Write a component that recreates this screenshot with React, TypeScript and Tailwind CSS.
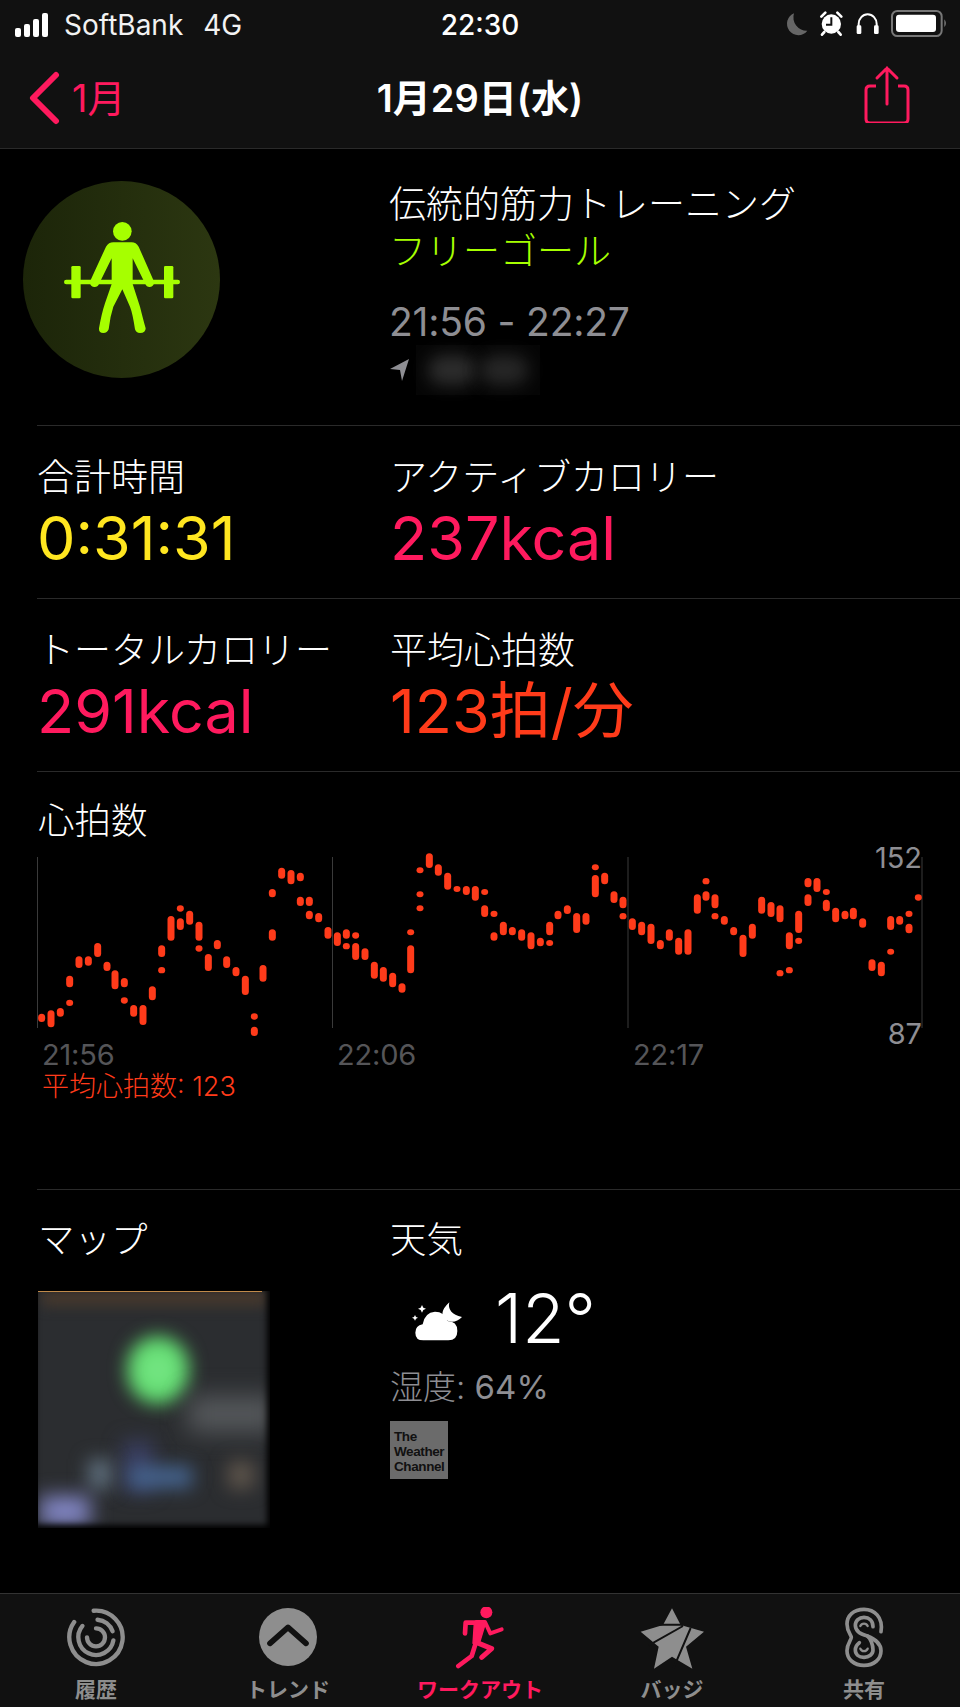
const FONT = "font-['Inter','Noto_Sans_CJK_JP',sans-serif]";

// heart rate bars, read as [x, top, bottom] in chart px * 3
const BARS: number[][] = [
  [65, 521, 546], [93, 511, 562], [121, 504, 530], [149, 479, 498], [149, 407, 442], [177, 349, 384],
  [205, 349, 377], [233, 309, 351], [261, 365, 393], [285, 391, 448], [313, 414, 442], [313, 472, 491],
  [341, 495, 530], [369, 495, 555], [397, 439, 481], [425, 381, 400], [425, 316, 351], [453, 228, 302],
  [481, 196, 215], [481, 235, 270], [509, 212, 254], [537, 245, 302], [537, 316, 335], [565, 342, 393],
  [592, 300, 328], [620, 349, 384], [648, 381, 409], [676, 407, 465], [703, 520, 539], [703, 560, 588],
  [729, 375, 425], [757, 268, 302], [757, 147, 172], [785, 83, 116], [813, 90, 133], [841, 98, 124],
  [841, 170, 198], [868, 170, 198], [868, 212, 238], [896, 219, 247], [924, 261, 296], [952, 277, 318],
  [979, 268, 296], [979, 309, 328], [1007, 277, 296], [1007, 309, 360], [1035, 325, 360], [1063, 365, 416],
  [1090, 381, 425], [1118, 398, 442], [1146, 430, 458], [1172, 316, 400], [1172, 268, 286], [1200, 196, 214],
  [1200, 154, 172], [1200, 82, 100], [1228, 40, 84], [1255, 73, 107], [1283, 98, 149], [1311, 138, 156],
  [1339, 138, 165], [1366, 138, 182], [1394, 147, 165], [1394, 196, 231],
  [1422, 212, 231], [1422, 277, 302], [1450, 245, 286], [1477, 261, 286], [1505, 268, 302], [1533, 277, 328],
  [1561, 293, 319], [1589, 245, 286], [1589, 300, 318], [1614, 212, 238], [1642, 196, 222], [1670, 219, 279],
  [1698, 219, 254], [1726, 73, 91], [1726, 105, 172], [1754, 98, 133], [1782, 154, 189], [1809, 170, 205],
  [1809, 219, 238], [1837, 235, 270], [1865, 245, 286], [1893, 251, 312], [1921, 300, 328], [1948, 268, 302],
  [1976, 293, 344], [2004, 268, 344], [2032, 163, 221], [2058, 114, 133], [2058, 154, 182], [2085, 163, 205],
  [2085, 219, 238], [2113, 228, 254], [2141, 261, 286], [2169, 284, 351], [2197, 251, 296], [2225, 170, 221],
  [2253, 186, 231], [2280, 196, 247], [2280, 390, 409], [2308, 277, 328], [2308, 381, 400], [2336, 212, 279],
  [2336, 293, 312], [2364, 114, 142], [2364, 163, 198], [2391, 114, 156], [2419, 147, 165], [2419, 179, 214],
  [2447, 203, 247], [2475, 212, 238], [2500, 203, 238], [2528, 235, 263], [2556, 358, 393], [2584, 365, 409],
  [2612, 228, 270], [2612, 326, 344], [2639, 228, 254], [2667, 212, 231], [2667, 251, 280], [2695, 163, 182],
];

function arc(cx: number, cy: number, r: number, from: number, to: number) {
  const pt = (a: number) => {
    const t = ((a - 90) * Math.PI) / 180;
    return `${(cx + r * Math.cos(t)).toFixed(1)} ${(cy + r * Math.sin(t)).toFixed(1)}`;
  };
  const large = to - from > 180 ? 1 : 0;
  return `M${pt(from)} A${r} ${r} 0 ${large} 1 ${pt(to)}`;
}

function StatusBar() {
  return (
    <div className="relative flex h-[49px] items-center pl-[15px] text-white">
      <div className="flex h-[24px] items-end gap-[3px]">
        <span className="h-[9px] w-[6px] rounded-[2px] bg-white" />
        <span className="h-[13px] w-[6px] rounded-[2px] bg-white" />
        <span className="h-[18px] w-[6px] rounded-[2px] bg-white" />
        <span className="h-[24px] w-[6px] rounded-[2px] bg-white" />
      </div>
      <span className="ml-[16px] text-[28px] leading-[30px] text-[#f2f2f2]">SoftBank</span>
      <span className="ml-[20px] text-[28px] leading-[30px] text-[#f2f2f2]">4G</span>
      <span className="absolute left-0 right-0 text-center text-[28px] leading-[30px] font-medium">22:30</span>
      <svg className="ml-auto" width="190" height="49" viewBox="0 0 570 147">
        <path d="M72 40 A34 34 0 1 0 112 92 A40 40 0 0 1 72 40Z" fill="#666" />
        <circle cx="184" cy="72" r="29" fill="#fff" />
        <path d="M184 52V74H168" stroke="#111" strokeWidth="6" fill="none" />
        <path d="M154 50 L166 38 M214 50 L202 38 M163 96 L156 104 M205 96 L212 104" stroke="#fff" strokeWidth="8" strokeLinecap="round" />
        <path d="M266 82 V72 A27 29 0 0 1 320 72 V82" stroke="#fff" strokeWidth="6" fill="none" />
        <rect x="260" y="76" width="14" height="26" rx="4" fill="#fff" />
        <rect x="312" y="76" width="14" height="26" rx="4" fill="#fff" />
        <rect x="366" y="33" width="149" height="75" rx="16" fill="none" stroke="#777" strokeWidth="6" />
        <rect x="378" y="44" width="120" height="52" rx="9" fill="#fff" />
        <path d="M523 58 Q533 70 523 82Z" fill="#777" />
      </svg>
    </div>
  );
}

function NavBar() {
  return (
    <div className="relative flex h-[99px] items-center pb-[2px]">
      <svg className="ml-[27px]" width="34" height="54" viewBox="0 0 34 54">
        <path d="M29 4 L6 27 L29 50" stroke="#ff1a5e" strokeWidth="6" strokeLinecap="round" strokeLinejoin="round" fill="none" />
      </svg>
      <span className="ml-[11px] text-[38px] leading-[40px] text-[#ff1a5e]">1月</span>
      <span className="absolute left-0 right-0 text-center text-[38px] leading-[40px] font-semibold text-white">1月29日(水)</span>
      <svg className="mb-[10px] ml-auto mr-[49px]" width="50" height="60" viewBox="0 0 50 60">
        <path d="M15 23 H9 Q5 23 5 27 V56 Q5 60 9 60 H43 Q47 60 47 56 V27 Q47 23 43 23 H37" stroke="#ff1a5e" strokeWidth="3" fill="none" />
        <path d="M26 41 V5 M16 15 L26 5 L36 15" stroke="#ff1a5e" strokeWidth="3" strokeLinecap="round" fill="none" />
      </svg>
    </div>
  );
}

function LifterIcon() {
  return (
    <svg width="150" height="130" viewBox="0 0 450 390" fill="#a6ff00">
      <circle cx="217" cy="64" r="28" />
      <rect x="42" y="209" width="348" height="14" rx="7" />
      <rect x="64" y="168" width="28" height="97" rx="4" />
      <rect x="342" y="168" width="28" height="97" rx="4" />
      <path d="M190 97 H245 Q258 97 266 110 L311 212 Q315 228 300 231 Q290 232 286 222 L248 145 V222 L270 290 Q280 330 287 355 Q287 369 270 369 Q258 369 255 358 Q248 310 240 290 L217 238 L190 290 Q180 320 176 358 Q172 369 160 369 Q146 369 147 355 Q155 310 165 280 L185 222 V145 L147 222 Q143 232 132 231 Q117 228 121 212 L168 110 Q176 97 190 97 Z" />
    </svg>
  );
}

function Stat({ label, value, color }: { label: string; value: string; color: string }) {
  return (
    <div>
      <div className="text-[37px] leading-[44px] font-light text-white">{label}</div>
      <div className={`mt-[2px] text-[61px] leading-[72px] ${color}`}>{value}</div>
    </div>
  );
}

function HeartChart() {
  return (
    <div className="relative h-[200px]">
      <svg className="block" width="960" height="200" viewBox="0 0 960 200">
        {[37.5, 332.5, 628, 922].map((x) => (
          <line key={x} x1={x} x2={x} y1="17" y2="188" stroke="#3a3a3a" strokeWidth="1" />
        ))}
        {BARS.map(([x, top, bottom], i) => {
          const w = 7;
          return (
            <rect key={i} x={20 + x / 3 - w / 2} y={top / 3} width={w} height={(bottom - top) / 3} rx={3.5} fill="#ff3b1a" />
          );
        })}
      </svg>
      <span className="absolute right-[38px] top-[2px] text-[29px] leading-[32px] text-[#8e8e93]">152</span>
      <span className="absolute right-[38px] top-[178px] text-[29px] leading-[32px] text-[#8e8e93]">87</span>
    </div>
  );
}

function MapThumb() {
  return (
    <div className="relative h-[237px] w-[232px] overflow-hidden bg-[#2b2d30]">
      <div className="absolute left-[4px] top-0 h-[14px] w-[226px] bg-[#4a3a2c] blur-[7px]" />
      <div className="absolute left-[89px] top-[45px] h-[68px] w-[62px] rounded-full bg-[radial-gradient(circle,#7be889,#4fd45f)] blur-[9px]" />
      <div className="absolute left-[150px] top-[105px] h-[36px] w-[90px] bg-[#55585b] blur-[12px]" />
      <div className="absolute left-[85px] top-[150px] h-[50px] w-[30px] bg-[#3a3f62] blur-[10px]" />
      <div className="absolute left-[50px] top-[168px] h-[30px] w-[24px] bg-[#5b6a78] blur-[9px]" />
      <div className="absolute left-[92px] top-[175px] h-[22px] w-[62px] bg-[#44628c] blur-[9px]" />
      <div className="absolute left-[190px] top-[170px] h-[28px] w-[26px] bg-[#5c534a] blur-[9px]" />
      <div className="absolute left-[2px] top-[205px] h-[30px] w-[50px] bg-[#8286c4] blur-[10px]" />
      <div className="absolute inset-0 shadow-[inset_-3px_-3px_6px_#000]" />
      <div className="absolute left-0 right-[8px] top-0 h-px bg-[#c08a4a]" />
    </div>
  );
}

function WeatherIcon() {
  return (
    <svg width="70" height="60" viewBox="0 0 210 180" fill="#fff">
      <path d="M148 52 Q140 85 186 96 Q165 118 138 106 Q112 86 148 52Z" />
      <path d="M66 60 L70 68 L78 71 L70 75 L66 83 L62 75 L54 71 L62 68Z" />
      <path d="M45 90 L48 96 L54 98 L48 101 L45 107 L42 101 L36 98 L42 96Z" />
      <path d="M70 166 Q46 166 46 143 Q46 122 68 118 Q74 82 105 80 Q133 80 142 108 Q172 108 172 138 Q172 166 145 166Z" />
    </svg>
  );
}

const TABS = [
  { label: "履歴", color: "text-[#8e8e8e]" },
  { label: "トレンド", color: "text-[#8e8e8e]" },
  { label: "ワークアウト", color: "text-[#ff1a5e]" },
  { label: "バッジ", color: "text-[#8e8e8e]" },
  { label: "共有", color: "text-[#8e8e8e]" },
];

function TabIcon({ index }: { index: number }) {
  const grey = "#8e8e8e";
  if (index === 0) {
    return (
      <svg width="80" height="62" viewBox="17 21 240 186" fill="none" stroke={grey} strokeWidth="13" strokeLinecap="round">
        <path d={arc(137, 112, 80, 355, 665)} />
        <path d={arc(137, 112, 53, 100, 310)} />
        <path d={arc(137, 112, 53, 5, 70)} />
        <path d={arc(137, 112, 27, 0, 270)} />
      </svg>
    );
  }
  if (index === 1) {
    return (
      <svg width="80" height="62" viewBox="596 21 240 186">
        <circle cx="716" cy="111" r="87" fill={grey} />
        <path d="M662 130 L716 82 L770 130" stroke="#111" strokeWidth="17" strokeLinecap="round" strokeLinejoin="round" fill="none" />
      </svg>
    );
  }
  if (index === 2) {
    return (
      <svg width="80" height="62" viewBox="87 21 240 186" fill="none" stroke="#ff1a5e" strokeLinecap="round" strokeLinejoin="round">
        <circle cx="226" cy="37" r="18" fill="#ff1a5e" stroke="none" />
        <path d="M162 100 L164 68 H212" strokeWidth="14" />
        <path d="M196 66 H222 L238 100 L272 88" strokeWidth="12" />
        <path d="M190 68 H224 L204 134 L186 130Z" fill="#ff1a5e" strokeWidth="4" />
        <path d="M198 128 L242 146 L212 172" strokeWidth="15" />
        <path d="M194 130 L182 168 L142 198" strokeWidth="14" />
      </svg>
    );
  }
  if (index === 3) {
    return (
      <svg width="80" height="62" viewBox="662 21 240 186">
        <path d="M782 25 L808 75 L878 95 L824 140 L843 206 L782 170 L728 206 L742 140 L688 95 L755 75Z" fill={grey} />
        <path d="M745 74 H815 M815 78 L712 136 M838 84 L784 210" stroke="#111" strokeWidth="6" fill="none" />
      </svg>
    );
  }
  return (
    <svg width="80" height="62" viewBox="340 21 240 186" fill="none" stroke={grey} strokeWidth="11" strokeLinecap="round">
      <path d="M511 95 C518 50 490 28 460 28 C428 28 409 47 409 72 C409 95 422 105 422 112 C422 120 409 130 409 152 C409 178 430 196 460 196 C490 196 511 178 511 152 C511 128 490 116 470 108" />
      <path d="M487 80 C487 62 475 52 460 52 C445 52 434 62 434 76 C434 95 450 103 470 108 C480 115 487 135 487 150 C487 163 475 172 460 172 C445 172 434 163 434 150 C434 140 438 134 446 128" />
      <path d="M471 78 A12 12 0 0 0 449 78 M449 146 A12 12 0 0 0 471 146" strokeWidth="7" />
    </svg>
  );
}

export default function App() {
  return (
    <div className={`flex h-[1707px] w-[960px] flex-col overflow-hidden bg-black ${FONT}`}>
      <header className="h-[149px] border-b border-[#2a2a2a] bg-[#111111]">
        <StatusBar />
        <NavBar />
      </header>

      <main className="flex-1">
        <section className="h-[276px] pl-[23px] pt-[32px]">
          <div className="flex">
            <div className="h-[197px] w-[197px] rounded-full bg-gradient-to-r from-[#1c2509] to-[#2c3711] pl-[27px] pt-[29px]">
              <LifterIcon />
            </div>
            <div className="ml-[169px]">
              <div className="text-[37px] leading-[47px] font-light text-white">伝統的筋力トレーニング</div>
              <div className="text-[37px] leading-[47px] font-light text-[#a6ff00]">フリーゴール</div>
              <div className="mt-[24px] text-[39px] leading-[46px] tracking-[-0.2px] text-[#8e8e93]">21:56 - 22:27</div>
              <div className="flex h-[50px] items-center">
                <svg width="22" height="24" viewBox="0 0 22 24">
                  <path d="M20 1 L1 11 L11 12 L13 23Z" fill="#8e8e93" />
                </svg>
                <div className="ml-[5px] flex h-[50px] w-[124px] items-center justify-center gap-[4px] bg-[#060606]">
                  <span className="h-[30px] w-[48px] rounded-full bg-[#2c2c2c] blur-[8px]" />
                  <span className="h-[30px] w-[48px] rounded-full bg-[#262626] blur-[8px]" />
                </div>
              </div>
            </div>
          </div>
        </section>

        <div className="ml-[37px] h-px bg-[#2a2a2a]" />
        <section className="grid h-[172px] grid-cols-[353px_1fr] pl-[37px] pt-[30px]">
          <Stat label="合計時間" value="0:31:31" color="text-[#ffe620]" />
          <Stat label="アクティブカロリー" value="237kcal" color="text-[#ff1a5e]" />
        </section>

        <div className="ml-[37px] h-px bg-[#2a2a2a]" />
        <section className="grid h-[172px] grid-cols-[353px_1fr] pl-[37px] pt-[30px]">
          <Stat label="トータルカロリー" value="291kcal" color="text-[#ff1a5e]" />
          <Stat label="平均心拍数" value="123拍/分" color="text-[#ff3b1a]" />
        </section>

        <div className="ml-[37px] h-px bg-[#2a2a2a]" />
        <section className="h-[417px] pt-[27px]">
          <div className="pl-[38px] text-[36.5px] leading-[44px] font-light text-white">心拍数</div>
          <div className="mt-[-3px]">
            <HeartChart />
          </div>
          <div className="relative mt-[-1px] h-[32px] text-[29px] leading-[32px] tracking-[-0.2px] text-[#555558]">
            <span className="absolute left-[42px]">21:56</span>
            <span className="absolute left-[337px]">22:06</span>
            <span className="absolute left-[633px]">22:17</span>
          </div>
          <div className="pl-[42px] text-[27px] leading-[32px] font-light text-[#ff3b1a]">平均心拍数: 123</div>
        </section>

        <div className="ml-[37px] h-px bg-[#2a2a2a]" />
        <section className="grid grid-cols-[352px_1fr] pl-[38px] pt-[28px]">
          <div>
            <div className="text-[36.5px] leading-[44px] font-light text-white">マップ</div>
            <div className="mt-[29px]">
              <MapThumb />
            </div>
          </div>
          <div>
            <div className="text-[36.5px] leading-[44px] font-light text-white">天気</div>
            <div className="mt-[18px] flex h-[70px] items-center pl-[10px]">
              <WeatherIcon />
              <span className="ml-[25px] mt-[6px] text-[69px] leading-[80px] font-light text-white">12°</span>
            </div>
            <div className="mt-[17px] text-[33px] leading-[40px] text-[#8e8e93]">
              <span className="font-light">湿度:</span> 64%
            </div>
            <div className="mt-[14px] flex h-[58px] w-[58px] flex-col justify-end bg-[#6b6b6b] px-[4px] pb-[5px] font-['Liberation_Sans',sans-serif] text-[13.5px] font-bold leading-[15px] tracking-[-0.4px] text-[#111]">
              <span>The</span>
              <span>Weather</span>
              <span>Channel</span>
            </div>
          </div>
        </section>
      </main>

      <nav className="grid h-[114px] grid-cols-5 border-t border-[#333] bg-[#111111] pt-[13px]">
        {TABS.map((tab, i) => (
          <div key={tab.label} className="flex flex-col items-center">
            <TabIcon index={i} />
            <span className={`mt-[6px] text-[21px] leading-[30px] font-bold ${tab.color}`}>{tab.label}</span>
          </div>
        ))}
      </nav>
    </div>
  );
}
